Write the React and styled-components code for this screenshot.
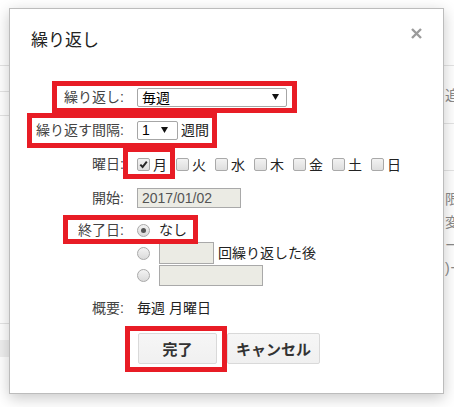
import React from 'react';
import styled, { createGlobalStyle } from 'styled-components';

const Global = createGlobalStyle`
  html, body { margin: 0; padding: 0; background: #fff; }
  body {
    font-family: "Liberation Sans", Arial, "Noto Sans CJK JP", sans-serif;
    font-size: 14px;
    color: #222;
  }
`;

const Page = styled.div`
  position: relative;
  width: 454px;
  height: 407px;
  overflow: hidden;
  background: #fff;
  display: flex;
  justify-content: space-between;
`;

const Strip = styled.div`
  width: ${(p) => p.$w}px;
  display: flex;
  flex-direction: column;
  overflow: hidden;
`;

const Cell = styled.div`
  height: ${(p) => p.$h}px;
  flex-shrink: 0;
  border-bottom: ${(p) => (p.$line ? '1px solid #e4e4e4' : 'none')};
  background: ${(p) => (p.$band ? '#efefef' : 'transparent')};
  display: flex;
  align-items: ${(p) => p.$align || 'center'};
  white-space: nowrap;
  padding-left: 1px;
  font-size: 14px;
  line-height: 20px;
  color: #8a8a8a;
`;

const Dialog = styled.div`
  position: absolute;
  left: 9px;
  top: 8px;
  width: 433px;
  height: 384px;
  border: 1px solid #bcbcbc;
  background: #fff;
  box-shadow: 0 4px 14px rgba(0, 0, 0, 0.22);
  display: flex;
  flex-direction: column;
`;

const Header = styled.div`
  display: flex;
  justify-content: space-between;
  align-items: flex-start;
  padding: 18px 21px 0 21px;
`;

const Title = styled.h2`
  margin: 0;
  font-family: "Noto Sans CJK JP", sans-serif;
  font-weight: 400;
  font-size: 17px;
  line-height: 24px;
  color: #222;
`;

const Close = styled.button`
  margin: 0;
  padding: 0;
  border: 0;
  background: none;
  width: 11px;
  height: 11px;
  display: block;
  cursor: pointer;
`;

const Form = styled.div`
  margin-top: 35px;
  display: flex;
  flex-direction: column;
`;

const Row = styled.div`
  display: flex;
  align-items: center;
  column-gap: 13px;
  height: ${(p) => p.$h || 22}px;
  margin-top: ${(p) => p.$mt || 0}px;
`;

const Label = styled.div`
  width: 114px;
  flex-shrink: 0;
  text-align: right;
  color: #444;
  line-height: 20px;
  white-space: nowrap;
`;

const Field = styled.div`
  display: flex;
  align-items: center;
  column-gap: ${(p) => p.$gap || 0}px;
  white-space: nowrap;
  line-height: 20px;
  color: #222;
`;

const Select = styled.div`
  box-sizing: border-box;
  width: ${(p) => p.$w}px;
  height: 19px;
  border: 1px solid #a6a6a6;
  border-radius: 2px;
  background: #fff;
  display: flex;
  align-items: center;
  justify-content: space-between;
  padding: 0 ${(p) => p.$pr}px 0 4px;
  color: #000;
  font-size: 14px;
`;

const Days = styled.div`
  display: flex;
  align-items: center;
  column-gap: 9px;
`;

const Day = styled.label`
  display: flex;
  align-items: center;
  column-gap: 3px;
  color: #222;
`;

const Box = styled.span`
  box-sizing: border-box;
  width: 13px;
  height: 13px;
  border: 1px solid #a9a9a9;
  border-radius: 2px;
  background: linear-gradient(#f2f2f2, #dedede);
  display: flex;
  align-items: center;
  justify-content: center;
`;

const Radio = styled.span`
  box-sizing: border-box;
  width: 13px;
  height: 13px;
  border: 1px solid #a9a9a9;
  border-radius: 50%;
  background: linear-gradient(#f3f3f3, #dadada);
  display: flex;
  align-items: center;
  justify-content: center;
  flex-shrink: 0;
  &::after {
    content: '';
    width: 5px;
    height: 5px;
    border-radius: 50%;
    background: ${(p) => (p.$on ? '#555' : 'transparent')};
  }
`;

const TextBox = styled.div`
  box-sizing: border-box;
  width: ${(p) => p.$w}px;
  height: ${(p) => p.$h}px;
  border: 1px solid #a9a9a9;
  background: #ebebe4;
  color: #545454;
  font-size: 14px;
  display: flex;
  align-items: center;
  padding-left: 4px;
`;

const Buttons = styled.div`
  display: flex;
  column-gap: 10px;
  padding-left: 128px;
  margin-top: 14px;
`;

const Button = styled.button`
  box-sizing: border-box;
  width: ${(p) => p.$w}px;
  height: 31px;
  margin: 0;
  padding: 0;
  border: 1px solid #d9d9d9;
  border-radius: 2px;
  background: linear-gradient(#f6f6f6, #f0f0f0);
  font-family: "Noto Sans CJK JP", sans-serif;
  font-weight: 700;
  font-size: 15px;
  color: #333;
  cursor: pointer;
`;

const Mark = styled.div`
  position: absolute;
  left: ${(p) => p.$x}px;
  top: ${(p) => p.$y}px;
  width: ${(p) => p.$w}px;
  height: ${(p) => p.$h}px;
  box-sizing: border-box;
  border: 5px solid #e81c25;
  pointer-events: none;
`;

const Arrow = () => (
  <svg width="7" height="6" viewBox="0 0 7 6">
    <polygon points="0,0 7,0 3.5,6" fill="#111" />
  </svg>
);

const Check = () => (
  <svg width="9" height="9" viewBox="0 0 9 9">
    <path d="M1.3 4.6 L3.6 7 L7.8 1.6" fill="none" stroke="#262626" strokeWidth="2" />
  </svg>
);

const days = ['月', '火', '水', '木', '金', '土', '日'];

export default function App() {
  return (
    <>
      <Global />
      <Page>
        <Strip $w={9}>
          <Cell $h={65} $line />
          <Cell $h={25} $line />
          <Cell $h={23} $line />
          <Cell $h={207} $line />
          <Cell $h={16} />
          <Cell $h={17} $band />
        </Strip>
        <Strip $w={10}>
          <Cell $h={65} $line />
          <Cell $h={57} $line>追加</Cell>
          <Cell $h={46} $line />
          <Cell $h={18} />
          <Cell $h={20}>限</Cell>
          <Cell $h={3} />
          <Cell $h={20}>変更</Cell>
          <Cell $h={3} />
          <Cell $h={20}>ーナ</Cell>
          <Cell $h={3} />
          <Cell $h={20}>)ー</Cell>
        </Strip>

        <Dialog>
          <Header>
            <Title>繰り返し</Title>
            <Close aria-label="閉じる">
              <svg width="11" height="11" viewBox="0 0 11 11">
                <path d="M1 1 L10 10 M10 1 L1 10" stroke="#9b9b9b" strokeWidth="2.4" />
              </svg>
            </Close>
          </Header>

          <Form>
            <Row>
              <Label>繰り返し:</Label>
              <Select $w={150} $pr={7}>
                <span>毎週</span>
                <Arrow />
              </Select>
            </Row>
            <Row $mt={11}>
              <Label>繰り返す間隔:</Label>
              <Field $gap={3}>
                <Select $w={41} $pr={9}>
                  <span>1</span>
                  <Arrow />
                </Select>
                <span>週間</span>
              </Field>
            </Row>
            <Row $mt={12}>
              <Label>曜日:</Label>
              <Days>
                {days.map((d, i) => (
                  <Day key={d}>
                    <Box>{i === 0 && <Check />}</Box>
                    <span>{d}</span>
                  </Day>
                ))}
              </Days>
            </Row>
            <Row $mt={12}>
              <Label>開始:</Label>
              <TextBox $w={104} $h={20}>2017/01/02</TextBox>
            </Row>
            <Row $mt={10}>
              <Label>終了日:</Label>
              <Field $gap={9}>
                <Radio $on />
                <span>なし</span>
              </Field>
            </Row>
            <Row $mt={1}>
              <Label />
              <Field $gap={9}>
                <Radio />
                <TextBox $w={55} $h={22} />
                <span style={{ marginLeft: -5 }}>回繰り返した後</span>
              </Field>
            </Row>
            <Row>
              <Label />
              <Field $gap={9}>
                <Radio />
                <TextBox $w={104} $h={21} />
              </Field>
            </Row>
            <Row $mt={11}>
              <Label>概要:</Label>
              <Field>毎週 月曜日</Field>
            </Row>
          </Form>

          <Buttons>
            <Button $w={79}>完了</Button>
            <Button $w={93}>キャンセル</Button>
          </Buttons>

          <Mark $x={42} $y={72} $w={245} $h={32} />
          <Mark $x={17} $y={104} $w={190} $h={35} />
          <Mark $x={113} $y={138} $w={52} $h={32} />
          <Mark $x={53} $y={206} $w={135} $h={29} />
          <Mark $x={115} $y={317} $w={102} $h={46} />
        </Dialog>
      </Page>
    </>
  );
}
